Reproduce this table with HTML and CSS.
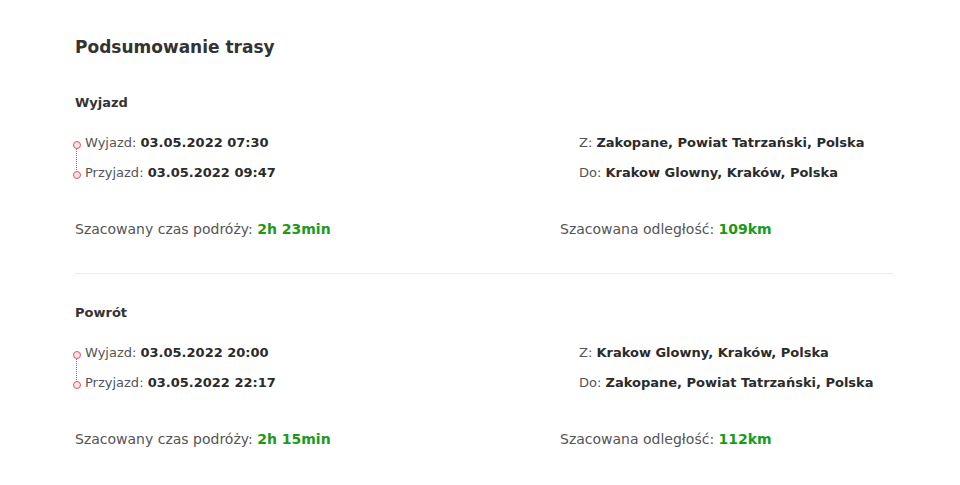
FILE: index.html
```html
<!DOCTYPE html>
<html lang="pl">
<head>
  <meta charset="UTF-8">
  <title>Podsumowanie trasy</title>
  <link rel="stylesheet" href="styles.css">
</head>
<body>

  <section class="summary">
    <h2>Podsumowanie trasy</h2>

    <!-- WYJAZD -->
    <div class="leg">
      <h3>Wyjazd</h3>
      <div class="times">
        <ul class="route">
          <li>Wyjazd: <b>03.05.2022 07:30</b></li>
          <li>Przyjazd: <b>03.05.2022 09:47</b></li>
        </ul>
        <ul class="places">
          <li>Z: <b>Zakopane, Powiat Tatrzański, Polska</b></li>
          <li>Do: <b>Krakow Glowny, Kraków, Polska</b></li>
        </ul>
      </div>
      <div class="estimate">
        <p>Szacowany czas podróży: <b>2h 23min</b></p>
        <p>Szacowana odległość: <b>109km</b></p>
      </div>
    </div>

    <!-- POWROT -->
    <div class="leg">
      <h3>Powrót</h3>
      <div class="times">
        <ul class="route">
          <li>Wyjazd: <b>03.05.2022 20:00</b></li>
          <li>Przyjazd: <b>03.05.2022 22:17</b></li>
        </ul>
        <ul class="places">
          <li>Z: <b>Krakow Glowny, Kraków, Polska</b></li>
          <li>Do: <b>Zakopane, Powiat Tatrzański, Polska</b></li>
        </ul>
      </div>
      <div class="estimate">
        <p>Szacowany czas podróży: <b>2h 15min</b></p>
        <p>Szacowana odległość: <b>112km</b></p>
      </div>
    </div>
  </section>

</body>
</html>
```

FILE: styles.css
```css
* {box-sizing: border-box; margin:0; padding:0;}
body {
  font-family:'DejaVu Sans','Open Sans',sans-serif;
  background:#fff; color:#555;
}
b {font-weight:700; color:#2b2b2b;}

.summary {width:818px; margin-left:75px; padding-top:35px;}
.summary h2 {
  font-size:17px; line-height:24px; font-weight:700; color:#333;
  margin-bottom:34px;
}

.leg h3 {font-size:13px; line-height:20px; font-weight:700; color:#333; margin-bottom:15px;}
.leg + .leg {border-top:1px solid #ececec; margin-top:34px; padding-top:29px;}

.times {display:grid; grid-template-columns:504px 1fr; font-size:13px;}
.times ul {list-style:none;}
.times li {line-height:30px;}

/* kropki i linia trasy */
.route {position:relative; padding-left:10px;}
.route::after {
  content:''; position:absolute; left:1px; top:18px; height:30px;
  border-left:1px dotted #e25563;
}
.route li {position:relative;}
.route li::before {
  content:''; position:absolute; left:-12px; top:13px;
  width:6px; height:6px; border:1.5px solid #e25563; border-radius:50%;
  background:#fbe3e5; z-index:1;
}

.estimate {
  display:grid; grid-template-columns:485px 1fr;
  font-size:14px; line-height:20px; margin-top:31px;
}
.estimate b {color:#1a9a1a;}
```
